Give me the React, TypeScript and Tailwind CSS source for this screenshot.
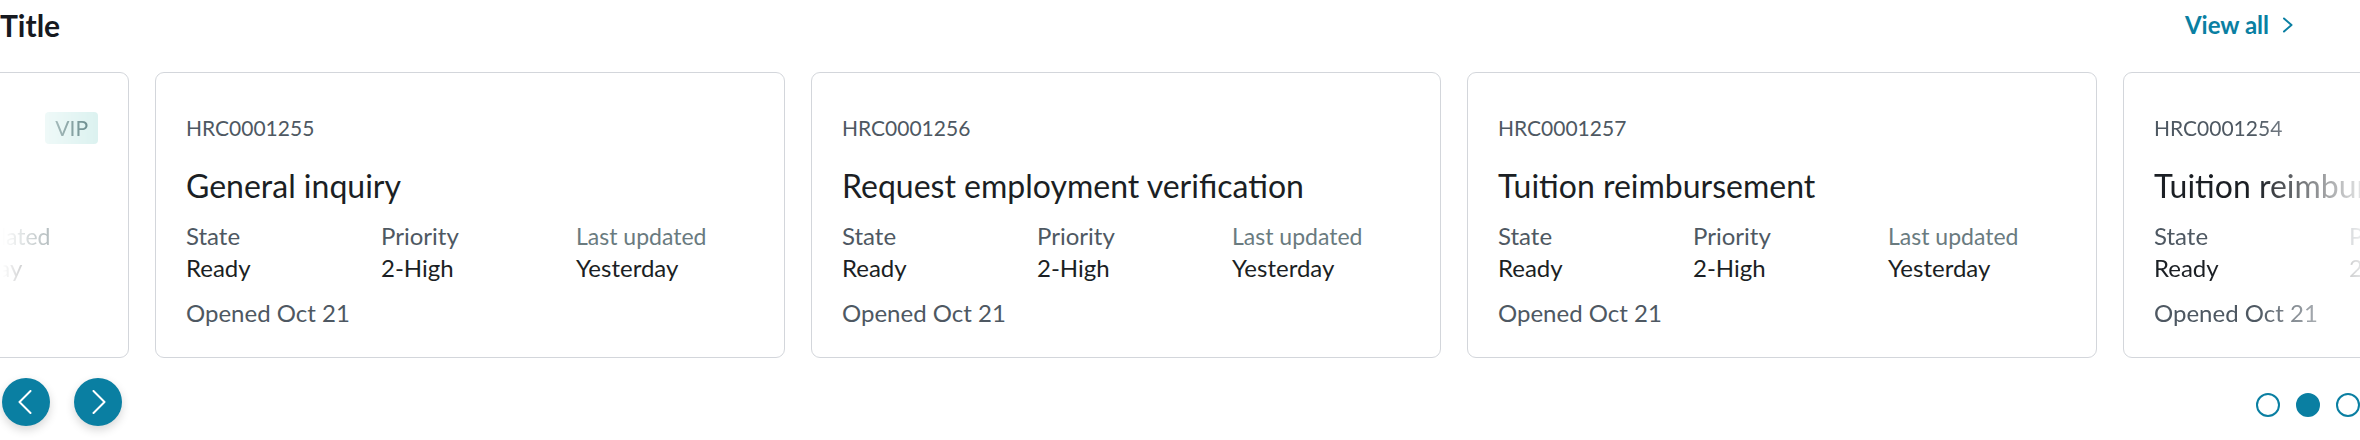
import React from "react";

type Ticket = {
    id: string;
    title: string;
    vip?: boolean;
    fade?: "left" | "right";
};

const tickets: Ticket[] = [
    { id: "HRC0001253", title: "Update address", vip: true, fade: "left" },
    { id: "HRC0001255", title: "General inquiry" },
    { id: "HRC0001256", title: "Request employment verification" },
    { id: "HRC0001257", title: "Tuition reimbursement" },
    { id: "HRC0001254", title: "Tuition reimbursement", fade: "right" },
];

function Chevron({ dir, className }: { dir: "left" | "right"; className?: string }) {
    return (
        <svg width="14" height="24" viewBox="0 0 14 24" fill="none" className={className}>
            <polyline
                points={dir === "left" ? "12.5,1 1.5,12 12.5,23" : "1.5,1 12.5,12 1.5,23"}
                stroke="currentColor"
                strokeWidth="2"
                strokeLinecap="round"
                strokeLinejoin="round"
            />
        </svg>
    );
}

function TicketCard({ ticket }: { ticket: Ticket }) {
    // edge cards get their content faded, the border stays crisp
    const fade =
        ticket.fade === "left"
            ? "[mask-image:linear-gradient(to_right,transparent_80%,black_95%)] [-webkit-mask-image:linear-gradient(to_right,transparent_80%,black_95%)]"
            : ticket.fade === "right"
              ? "[mask-image:linear-gradient(to_right,black_21%,transparent_40%)] [-webkit-mask-image:linear-gradient(to_right,black_21%,transparent_40%)]"
              : "";

    return (
        <div className="shrink-0 w-[630px] h-[286px] rounded-[9px] border-[1.5px] border-[#d3d6db] bg-white">
            <div className={`h-full px-[30px] pt-[39px] ${fade}`}>
                <div className="flex h-[32px] items-center justify-between">
                    <span className="text-[21px] leading-[32px] text-[#4e5862]">{ticket.id}</span>
                    {ticket.vip && (
                        <span className="flex h-[32px] items-center rounded-[4px] bg-[#dcf2f0] px-[10px] text-[21px] text-[#5e8384]">
                            VIP
                        </span>
                    )}
                </div>
                <div className="mt-[22px] whitespace-nowrap text-[32px] leading-[40px] text-[#1b1f24]">
                    {ticket.title}
                </div>
                <div className="mt-[14px] grid grid-cols-[195px_195px_1fr] text-[24px] leading-[32px] whitespace-nowrap">
                    <span className="text-[#4e5862]">State</span>
                    <span className="text-[#4e5862]">Priority</span>
                    <span className="text-[23px] text-[#6a7b7f]">Last updated</span>
                    <span className="text-[#1b1f24]">Ready</span>
                    <span className="text-[#1b1f24]">2-High</span>
                    <span className="text-[#1b1f24]">Yesterday</span>
                </div>
                <div className="mt-[13px] text-[24px] leading-[32px] text-[#4e5862]">Opened Oct 21</div>
            </div>
        </div>
    );
}

export default function App() {
    return (
        <div className="w-[2360px] h-[440px] overflow-hidden bg-white [font-family:Lato,'Noto_Sans',sans-serif]">
            {/* Header */}
            <div className="flex h-[49px] items-center justify-between">
                <h2 className="text-[30px] font-bold leading-[36px] text-[#16191f]">Title</h2>
                <a className="mr-[66px] flex items-center gap-[13px] text-[24px] font-bold leading-[32px] text-[#0a7fa2]">
                    View all
                    <svg width="12" height="16" viewBox="0 0 12 16" fill="none">
                        <polyline
                            points="2,1.5 9.5,8 2,14.5"
                            stroke="currentColor"
                            strokeWidth="2"
                            strokeLinecap="round"
                            strokeLinejoin="round"
                        />
                    </svg>
                </a>
            </div>

            {/* Carousel track */}
            <div className="mt-[23px] overflow-hidden">
                <div className="flex gap-[26px] -translate-x-[501px]">
                    {tickets.map((t, i) => (
                        <TicketCard key={i} ticket={t} />
                    ))}
                </div>
            </div>

            {/* Controls */}
            <div className="mt-[20px] flex items-center justify-between">
                <div className="ml-[2px] flex gap-[24px]">
                    <button className="flex h-[48px] w-[48px] items-center justify-center rounded-full bg-[#0a7fa2] text-white shadow-[0_4px_10px_rgba(0,0,0,0.16)]">
                        <Chevron dir="left" className="-ml-[2px]" />
                    </button>
                    <button className="flex h-[48px] w-[48px] items-center justify-center rounded-full bg-[#0a7fa2] text-white shadow-[0_4px_10px_rgba(0,0,0,0.16)]">
                        <Chevron dir="right" className="ml-[2px]" />
                    </button>
                </div>
                <div className="mt-[6px] flex gap-[16px]">
                    <span className="h-[24px] w-[24px] rounded-full border-2 border-[#0a7fa2]" />
                    <span className="h-[24px] w-[24px] rounded-full border-2 border-[#0a7fa2] bg-[#0a7fa2]" />
                    <span className="h-[24px] w-[24px] rounded-full border-2 border-[#0a7fa2]" />
                </div>
            </div>
        </div>
    );
}
